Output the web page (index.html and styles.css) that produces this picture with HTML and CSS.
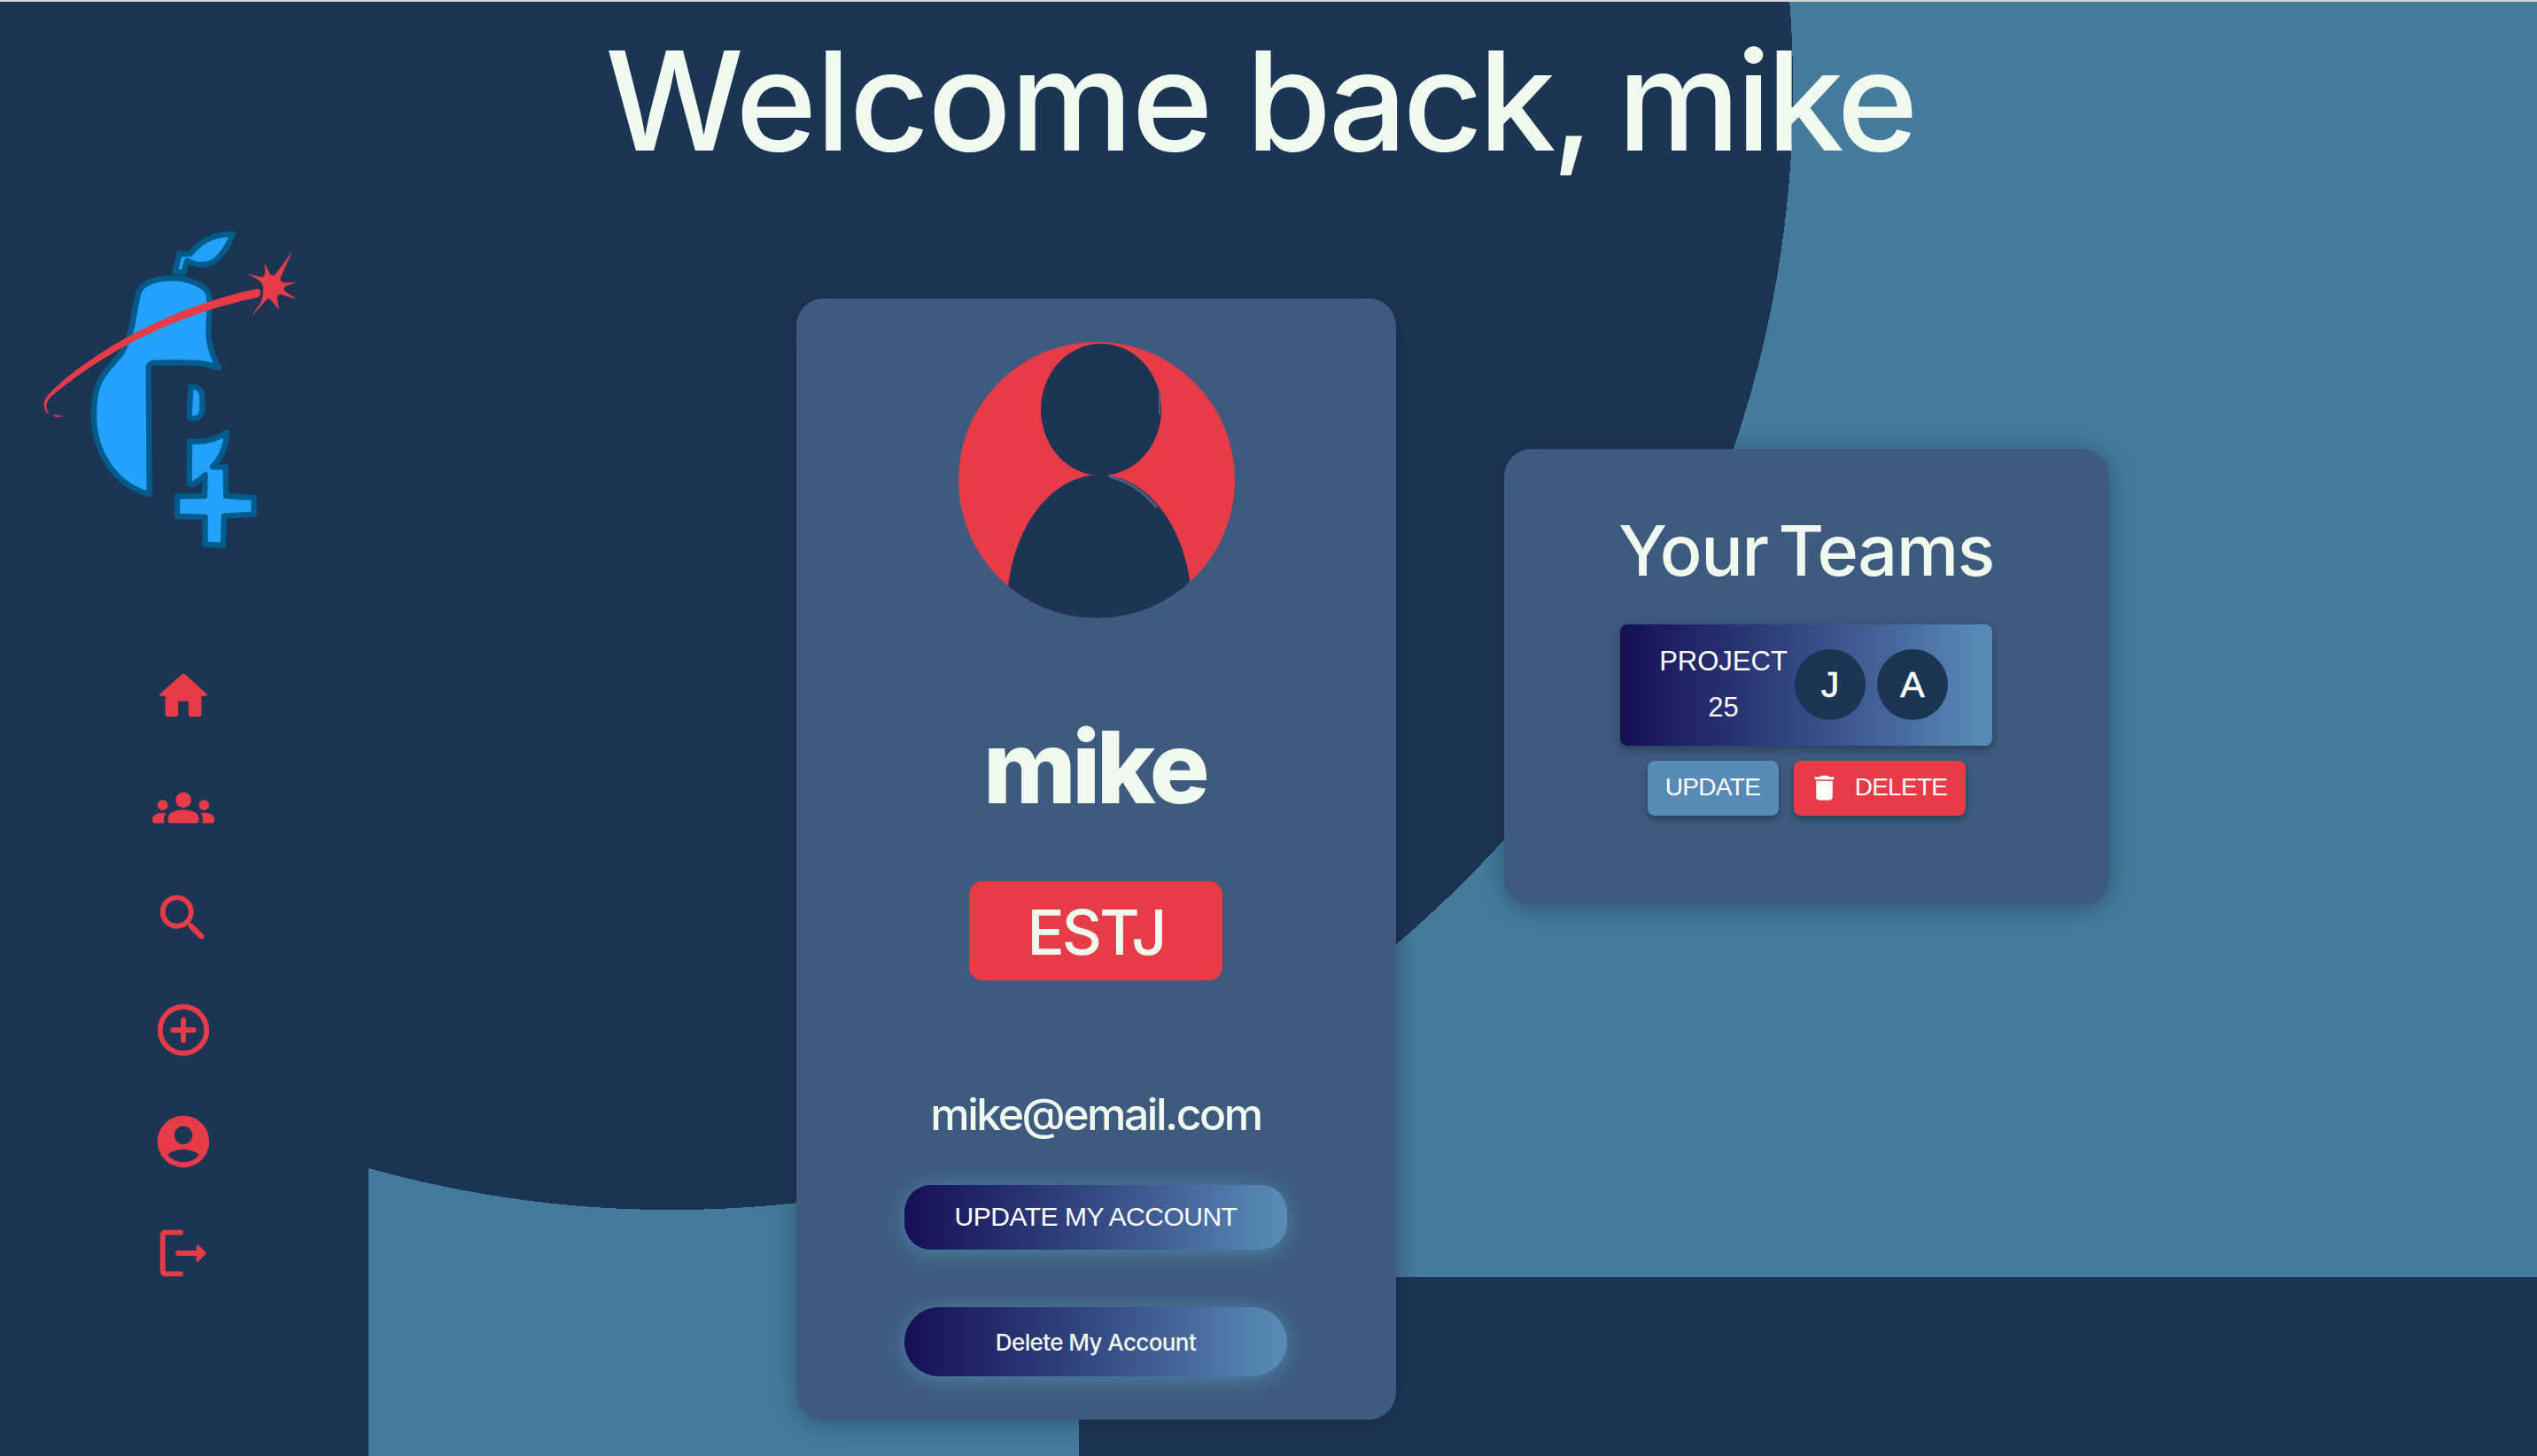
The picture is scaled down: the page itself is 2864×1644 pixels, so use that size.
FILE: index.html
```html
<!DOCTYPE html>
<html lang="en">
<head>
<meta charset="utf-8">
<title>Dashboard</title>
<link rel="stylesheet" href="styles.css">
</head>
<body>
<div class="page">
  <h1 class="welcome">Welcome <span class="greeting-end">back, mike</span></h1>
  <div class="layout">
    <aside class="sidebar">
      <svg class="logo" viewBox="0 0 1200 1200">
        <g class="pear">
          <path d="M532 200 L548 140 H584 C620 95 670 72 728 73 C715 110 695 140 668 163 C640 182 600 180 574 162 L562 204 Z"/>
          <path d="M406 285 C410 245 455 222 522 222 C580 222 647 250 648 285 C655 330 640 385 648 430 C653 470 668 500 680 526 C620 500 530 510 460 509 C447 510 440 520 443 535 L446 954 C330 925 258 810 258 690 C256 560 300 540 350 478 C395 400 390 350 406 285 Z"/>
          <path d="M586 590 C615 590 625 600 625 630 V665 C625 688 612 698 592 698 C583 698 580 694 581 680 Z"/>
          <path d="M582 775 C640 780 680 765 708 744 C706 790 690 830 660 861 L704 862 L706 960 L800 966 V1022 L699 1028 L696 1128 L634 1124 L635 1032 L540 1029 V962 L633 960 L635 888 C618 905 602 917 588 922 C582 918 580 912 581 900 Z"/>
        </g>
        <path class="orbit" d="M100 680 C85 660 85 640 103 617 C250 470 520 320 808 259 C826 255 828 284 810 288 C530 345 280 480 112 624 C94 646 93 660 105 680 Z"/>
        <path class="orbit" d="M116 684 L156 690 L130 693 Z"/>
        <path class="orbit" d="M777 207 L828 219 C840 215 839 195 835 170 L855 209 C862 216 870 214 874 207 L930 132 L892 215 C887 228 892 236 903 237 L943 237 L906 250 C899 256 900 262 906 268 L947 294 L896 279 C884 275 878 280 879 290 L885 330 L855 293 C850 290 845 292 841 297 L791 353 L824 302 C832 285 830 270 832 256 C830 238 820 228 777 207 Z"/>
      </svg>
      <nav class="menu">
        <svg viewBox="0 0 24 24"><path d="M10 19v-5h4v5c0 .55.45 1 1 1h3c.55 0 1-.45 1-1v-7h1.7c.46 0 .68-.57.33-.87L12.67 3.6c-.38-.34-.96-.34-1.34 0l-8.36 7.53c-.34.3-.13.87.33.87H5v7c0 .55.45 1 1 1h3c.55 0 1-.45 1-1z"/></svg>
        <svg viewBox="0 0 24 24"><path d="M12 12.75c1.63 0 3.07.39 4.24.9 1.08.48 1.76 1.56 1.76 2.73V17c0 .55-.45 1-1 1H7c-.55 0-1-.45-1-1v-.61c0-1.18.68-2.26 1.76-2.73 1.17-.52 2.61-.91 4.24-.91zM4 13c1.1 0 2-.9 2-2s-.9-2-2-2-2 .9-2 2 .9 2 2 2zm1.13 1.1c-.37-.06-.74-.1-1.13-.1-.99 0-1.93.21-2.78.58C.48 14.9 0 15.62 0 16.43V17c0 .55.45 1 1 1h3.5v-1.61c0-.83.23-1.61.63-2.29zM20 13c1.1 0 2-.9 2-2s-.9-2-2-2-2 .9-2 2 .9 2 2 2zm4 3.43c0-.81-.48-1.53-1.22-1.85-.85-.37-1.79-.58-2.78-.58-.39 0-.76.04-1.13.1.4.68.63 1.46.63 2.29V18H23c.55 0 1-.45 1-1v-.57zM12 6c1.66 0 3 1.34 3 3s-1.34 3-3 3-3-1.34-3-3 1.34-3 3-3z"/></svg>
        <svg viewBox="0 0 24 24"><path d="M15.5 14h-.79l-.28-.27c1.2-1.4 1.82-3.31 1.48-5.34-.47-2.78-2.79-5-5.59-5.34-4.23-.52-7.79 3.04-7.27 7.27.34 2.8 2.56 5.12 5.34 5.59 2.03.34 3.94-.28 5.34-1.48l.27.28v.79l4.25 4.25c.41.41 1.08.41 1.49 0 .41-.41.41-1.08 0-1.49L15.5 14zm-6 0C7.01 14 5 11.99 5 9.5S7.01 5 9.5 5 14 7.01 14 9.5 11.99 14 9.5 14z"/></svg>
        <svg class="outline" viewBox="0 0 24 24"><circle cx="12" cy="12" r="9"/><path d="M12 8v8M8 12h8"/></svg>
        <svg viewBox="0 0 24 24"><path d="M12 2C6.48 2 2 6.48 2 12s4.48 10 10 10 10-4.48 10-10S17.52 2 12 2zm0 4c1.93 0 3.5 1.57 3.5 3.5S13.93 13 12 13s-3.500-1.570-3.500-3.500S10.070 6 12 6zm0 14c-2.030 0-4.430-.820-6.140-2.880C7.550 15.800 9.680 15 12 15s4.450.800 6.140 2.120C16.430 19.180 14.030 20 12 20z"/></svg>
        <svg viewBox="0 0 24 24"><path d="M5 5h6c.55 0 1-.45 1-1s-.45-1-1-1H5c-1.100 0-2 .9-2 2v14c0 1.100.9 2 2 2h6c.55 0 1-.45 1-1s-.45-1-1-1H5V5zM20.650 11.650l-2.790-2.790c-.32-.32-.86-.1-.86.35V11h-7c-.55 0-1 .45-1 1s.45 1 1 1h7v1.790c0 .45.54.67.85.35l2.790-2.790c.2-.19.2-.51.010-.7z"/></svg>
      </nav>
    </aside>
    <main class="content">
      <section class="card profile">
        <svg class="portrait" viewBox="0 0 312 312">
          <clipPath id="round"><circle cx="156" cy="156" r="156"/></clipPath>
          <g clip-path="url(#round)">
            <rect class="portrait-bg" width="312" height="312"/>
            <ellipse class="portrait-body" cx="159" cy="301" rx="104.500" ry="151"/>
            <ellipse class="portrait-body" cx="161" cy="76.500" rx="68" ry="74.500"/>
            <path class="portrait-edge" d="M170 152 C193 157 211 171 224 187"/>
            <path class="portrait-edge thin" d="M227 54 V82"/>
          </g>
        </svg>
        <h2 class="name"><span>mike</span></h2>
        <div class="type"><span>ESTJ</span></div>
        <p class="email"><span>mike@email.com</span></p>
        <button class="pill update"><span>UPDATE MY ACCOUNT</span></button>
        <button class="pill remove"><span>Delete My Account</span></button>
      </section>
      <section class="card teams">
        <h2 class="teams-title"><span>Your Teams</span></h2>
        <div class="project">
          <div class="project-name">PROJECT 25</div>
          <div class="member">J</div>
          <div class="member">A</div>
        </div>
        <div class="actions">
          <button class="btn btn-update"><span>UPDATE</span></button>
          <button class="btn btn-delete"><svg viewBox="0 0 24 24"><path d="M6 19c0 1.100.9 2 2 2h8c1.100 0 2-.9 2-2V7H6v12zM19 4h-3.500l-1-1h-5l-1 1H5v2h14V4z"/></svg><span>DELETE</span></button>
        </div>
      </section>
    </main>
  </div>
</div>
</body>
</html>
```
FILE: styles.css
```css
:root {
  --navy: #1d3554;
  --teal: #447b9c;
  --card: #3e5a7e;
  --red: #e83b48;
  --cream: #f1faee;
  --sky: #578ab5;
  --fade: linear-gradient(90deg, #150f55 0%, #2f407b 42%, #46679c 73%, #578ab5 97%);
}
* { box-sizing: border-box; }
body { margin: 0; background: var(--navy); color: var(--cream); font-family: Inter, sans-serif; }
h1, h2, p { margin: 0; font-weight: 450; }
span { white-space: nowrap; }

.page {
  height: 1644px;
  overflow: hidden;
  border-top: 2px solid #d5d7da;
  background:
    linear-gradient(var(--navy), var(--navy)) 0 0 / 416px 100% no-repeat,
    linear-gradient(var(--navy), var(--navy)) 1218px 1440px / 1646px 205px no-repeat,
    radial-gradient(circle at 758px 98px, var(--navy) 1266px, var(--teal) 1266px);
}
.welcome { height: 335px; padding: 21px 20px 0 0; text-align: center; font-size: 156px; line-height: 182px; letter-spacing: -1.3px; word-spacing: -2px; }
.greeting-end { letter-spacing: -4.6px; word-spacing: -4px; }
.layout { display: flex; }

.sidebar { width: 416px; margin-top: -97px; flex: none; }
.logo { display: block; width: 400px; height: 400px; margin-left: 20px; }
.pear path { fill: #22a2fd; stroke: #025c8b; stroke-width: 19; stroke-linejoin: round; }
.orbit { fill: var(--red); }
.menu { display: flex; flex-direction: column; align-items: center; gap: 55.800px; padding: 110.800px 2px 0 0; }
.menu svg { width: 70px; height: 70px; fill: var(--red); }
.menu .outline { fill: none; stroke: var(--red); stroke-width: 2; stroke-linecap: round; }

.content { display: flex; align-items: flex-start; gap: 122px; padding-left: 483px; }
.card { background: var(--card); border-radius: 31px; box-shadow: 0 3px 28px rgba(20, 26, 50, .4); display: flex; flex-direction: column; align-items: center; flex: none; }
.profile { width: 677px; height: 1266px; padding: 49px 1px 0 0; }
.portrait { width: 312px; height: 312px; margin-left: 2px; }
.portrait-bg { fill: var(--red); }
.portrait-body { fill: var(--navy); }
.portrait-edge { fill: none; stroke: #49607c; stroke-width: 3; }
.portrait-edge.thin { stroke-width: 2; }
.name { margin-top: 98px; font-size: 113px; line-height: 140px; letter-spacing: -4.500px; padding-right: 3px; }
.name span { font-weight: 800; }
.type { width: 286px; height: 112px; margin-top: 59px; padding: 3px 0 0; border-radius: 15px; background: var(--red); display: flex; align-items: center; justify-content: center; font-size: 70px; font-weight: 450; letter-spacing: -3px; }
.email { margin-top: 121px; padding-bottom: 1px; font-size: 50px; line-height: 60px; letter-spacing: -2.500px; }
.pill { display: flex; align-items: center; justify-content: center; width: 432px; padding: 0; border: 0; background: var(--fade); box-shadow: 0 3px 24px rgba(79, 149, 185, .75); flex: none; }
.update { height: 73px; margin-top: 49px; padding-bottom: 2px; border-radius: 30px; color: #fff; font: 30px "Liberation Sans", sans-serif; letter-spacing: -.5px; }
.remove { height: 78px; margin-top: 65px; border-radius: 39px; color: var(--cream); font: 450 26px Inter, sans-serif; letter-spacing: -.6px; }

.teams { width: 683px; height: 515px; margin-top: 170px; padding: 67px 1px 0 0; }
.teams-title { font-size: 79px; line-height: 94px; letter-spacing: -1.3px; word-spacing: -8px; }
.project { display: flex; align-items: center; width: 420px; height: 137px; margin-top: 37px; padding: 0 37px 0 40px; border-radius: 8px; background: var(--fade); box-shadow: 0 4px 8px rgba(20, 28, 45, .45); }
.project-name { width: 153px; margin-right: 4px; padding-bottom: 2px; flex: none; text-align: center; color: #fff; font: 31px/52px "Liberation Sans", sans-serif; }
.member { width: 80px; height: 80px; margin: 0 13px 1px 0; flex: none; border-radius: 50%; background: var(--navy); color: #fff; text-align: center; font: 41px/80px "Liberation Sans", sans-serif; -webkit-text-stroke: .6px #fff; }
.actions { display: flex; gap: 17px; margin-top: 17px; }
.btn { display: flex; align-items: center; justify-content: center; height: 62px; padding: 0 0 2px; border: 0; border-radius: 8px; color: #fff; font: 28px "Liberation Sans", sans-serif; letter-spacing: -.7px; box-shadow: 0 4px 7px rgba(20, 28, 45, .45); }
.btn svg { width: 37px; height: 37px; fill: #fff; }
.btn-update { width: 148px; background: var(--sky); }
.btn-delete { width: 194px; gap: 16px; padding-right: 4px; background: var(--red); }
```
